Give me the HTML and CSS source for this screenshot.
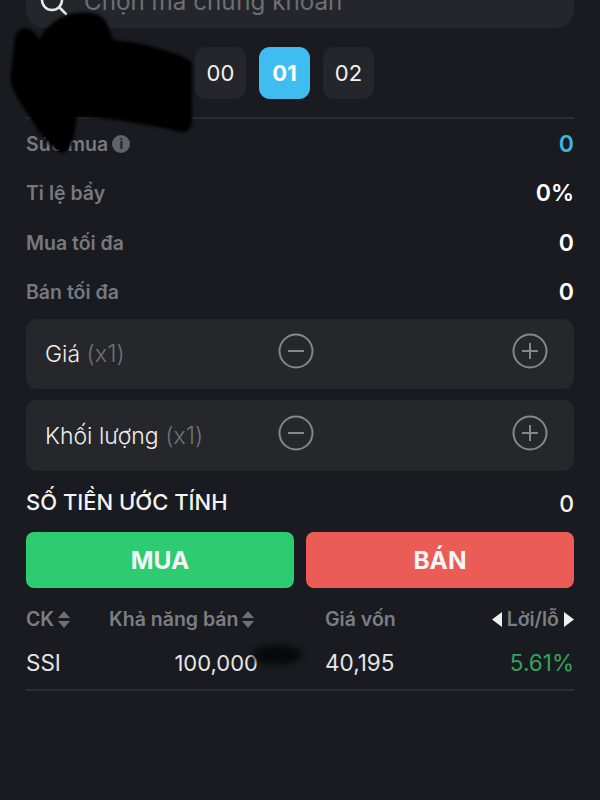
FILE: index.html
```html
<!DOCTYPE html>
<html lang="en">
<head>
  <meta charset="UTF-8" />
  <title>Đặt lệnh</title>
  <link rel="stylesheet" href="styles.css">
</head>
<body>
  <div class="page">
    <div class="search">
      <svg class="search-icon" width="30" height="30" viewBox="0 0 30 30">
        <circle cx="13" cy="13" r="10" />
        <path d="M20.5 20.5 L27 27" />
      </svg>
      <span>Chọn mã chứng khoán</span>
    </div>

    <div class="accounts">
      <button class="account">00</button>
      <button class="account active">01</button>
      <button class="account">02</button>
    </div>

    <div class="stats">
      <div class="stat">
        <span class="stat-label">Sức mua <i class="info">i</i></span>
        <span class="stat-value blue">0</span>
      </div>
      <div class="stat">
        <span class="stat-label">Tỉ lệ bẩy</span>
        <span class="stat-value">0%</span>
      </div>
      <div class="stat">
        <span class="stat-label">Mua tối đa</span>
        <span class="stat-value">0</span>
      </div>
      <div class="stat">
        <span class="stat-label">Bán tối đa</span>
        <span class="stat-value">0</span>
      </div>
    </div>

    <div class="field">
      <span class="field-label">Giá <small>(x1)</small></span>
      <svg class="step minus" width="36" height="36" viewBox="0 0 36 36">
        <circle cx="18" cy="18" r="16.5" />
        <path d="M10 18 H26" />
      </svg>
      <svg class="step" width="36" height="36" viewBox="0 0 36 36">
        <circle cx="18" cy="18" r="16.5" />
        <path d="M10 18 H26 M18 10 V26" />
      </svg>
    </div>
    <div class="field">
      <span class="field-label">Khối lượng <small>(x1)</small></span>
      <svg class="step minus" width="36" height="36" viewBox="0 0 36 36">
        <circle cx="18" cy="18" r="16.5" />
        <path d="M10 18 H26" />
      </svg>
      <svg class="step" width="36" height="36" viewBox="0 0 36 36">
        <circle cx="18" cy="18" r="16.5" />
        <path d="M10 18 H26 M18 10 V26" />
      </svg>
    </div>

    <div class="total">
      <span>SỐ TIỀN ƯỚC TÍNH</span>
      <span class="total-value">0</span>
    </div>

    <div class="actions">
      <button class="btn buy">MUA</button>
      <button class="btn sell">BÁN</button>
    </div>

    <div class="table">
      <div class="table-row table-head">
        <span>CK
          <svg class="sort" width="12" height="17" viewBox="0 0 12 17"><path d="M6 0 L12 7 H0 Z M0 10 H12 L6 17 Z" /></svg>
        </span>
        <span>Khả năng bán
          <svg class="sort" width="12" height="17" viewBox="0 0 12 17"><path d="M6 0 L12 7 H0 Z M0 10 H12 L6 17 Z" /></svg>
        </span>
        <span>Giá vốn</span>
        <span class="col-pl">
          <svg class="arrow" width="10" height="15" viewBox="0 0 10 15"><path d="M10 0 V15 L0 7.5 Z" /></svg>
          Lời/lỗ
          <svg class="arrow" width="10" height="15" viewBox="0 0 10 15"><path d="M0 0 V15 L10 7.5 Z" /></svg>
        </span>
      </div>
      <div class="table-row table-body">
        <span>SSI</span>
        <span class="col-qty">100,000</span>
        <span>40,195</span>
        <span class="col-pl green">5.61%</span>
      </div>
    </div>
  </div>

  <!-- vet den che thong tin tai khoan -->
  <svg class="scribble" width="200" height="160" viewBox="0 0 200 160">
    <path d="M15 37 C18 26 30 24 40 40 C42 30 60 14 77 13 C92 11 104 14 108 26 L113 40 C130 42 145 44 153 47 C170 52 186 56 192 63 L192 123 C190 130 186 133 180 132 C150 124 110 118 77 117 L73 140 C70 148 66 153 61 153 C52 148 44 138 38 130 C30 116 20 104 15 93 C10 84 10 78 11 73 Z" />
  </svg>
  <div class="smudge"></div>
</body>
</html>
```

FILE: styles.css
```css
* {
  box-sizing: border-box;
  margin: 0;
  padding: 0;
}

body {
  width: 600px;
  height: 800px;
  overflow: hidden;
  background: #191b20;
  color: #fff;
  font-family: 'Inter', 'Liberation Sans', sans-serif;
}

.page {
  padding: 0 26px;
}

.search {
  display: flex;
  align-items: center;
  gap: 15px;
  height: 56px;
  margin-top: -28px;
  padding-left: 13px;
  padding-top: 3px;
  background: #24262b;
  border-radius: 18px;
  font-size: 24.2px;
  color: #6d6f74;
}

.search-icon {
  fill: none;
  stroke: #e8e8e8;
  stroke-width: 2.5;
  stroke-linecap: round;
}

.accounts {
  display: flex;
  justify-content: center;
  gap: 13px;
  margin-top: 19px;
  padding-right: 31px;
  padding-bottom: 18px;
  border-bottom: 2px solid #2b2d32;
}

.account {
  width: 51px;
  height: 52px;
  border: none;
  border-radius: 11px;
  background: #24262b;
  color: #f2f2f2;
  font-family: inherit;
  font-size: 22px;
}

.account.active {
  background: #3fbdf0;
  color: #fff;
  font-weight: 700;
}

.stat {
  display: flex;
  justify-content: space-between;
  align-items: center;
  height: 49.5px;
}

.stat-label {
  display: flex;
  align-items: center;
  gap: 4px;
  font-size: 19.5px;
  font-weight: 600;
  color: #77797d;
}

.stat-value {
  font-size: 23px;
  font-weight: 600;
  color: #fff;
}

.stat-value.blue {
  color: #3fb4e4;
}

.info {
  width: 18px;
  height: 18px;
  border-radius: 50%;
  background: #606266;
  color: #25272b;
  font-size: 13px;
  font-weight: 800;
  font-style: normal;
  line-height: 18px;
  text-align: center;
}

.field {
  display: flex;
  align-items: center;
  height: 70px;
  margin-top: 11px;
  padding-left: 19px;
  padding-bottom: 6px;
  background: #25272b;
  border-radius: 11px;
}

.stats + .field {
  margin-top: 2px;
}

.field + .field {
  height: 71px;
}

.field-label {
  width: 233px;
  padding-top: 5px;
  font-size: 23px;
  font-weight: 300;
  color: #eee;
}

.field-label small {
  font-size: 23.5px;
  color: #6f7175;
}

.step {
  fill: none;
  stroke: #85878a;
  stroke-width: 2;
}

.step.minus {
  margin-right: 198px;
}

.total {
  display: flex;
  justify-content: space-between;
  align-items: center;
  margin-top: 18px;
  height: 26px;
  font-size: 22px;
  font-weight: 500;
  color: #f4f4f4;
}

.total-value {
  padding-top: 4px;
  font-size: 23px;
  font-weight: 500;
}

.actions {
  display: flex;
  gap: 12px;
  margin-top: 17px;
}

.btn {
  flex: 1;
  height: 56px;
  border: none;
  border-radius: 8px;
  color: #f5f5f5;
  font-family: inherit;
  font-size: 24.5px;
  font-weight: 700;
}

.buy {
  background: #2dcc70;
}

.sell {
  background: #ec5c56;
}

.table {
  margin-top: 18px;
}

.table-row {
  display: grid;
  grid-template-columns: 83px 216px 1fr auto;
  align-items: center;
}

.table-head {
  height: 26px;
  font-size: 19.5px;
  font-weight: 600;
  color: #7c7e82;
}

.table-head span {
  display: flex;
  align-items: center;
  gap: 4px;
}

.table-head .col-pl {
  gap: 5px;
}

.table-body {
  height: 59px;
  padding-top: 4px;
  border-bottom: 2px solid #2b2d32;
  font-size: 22.5px;
  color: #e6e6e6;
}

.col-qty {
  padding-right: 67px;
  font-size: 22px;
  text-align: right;
}

.green {
  color: #33a35f;
}

.sort {
  fill: #6d6f73;
}

.arrow {
  fill: #f0f0f0;
}

.scribble {
  position: absolute;
  left: 0;
  top: 0;
  fill: #000;
  filter: blur(1.5px);
}

.smudge {
  position: absolute;
  left: 252px;
  top: 645px;
  width: 50px;
  height: 20px;
  border-radius: 50%;
  background: #08090b;
  filter: blur(3px);
}
```
